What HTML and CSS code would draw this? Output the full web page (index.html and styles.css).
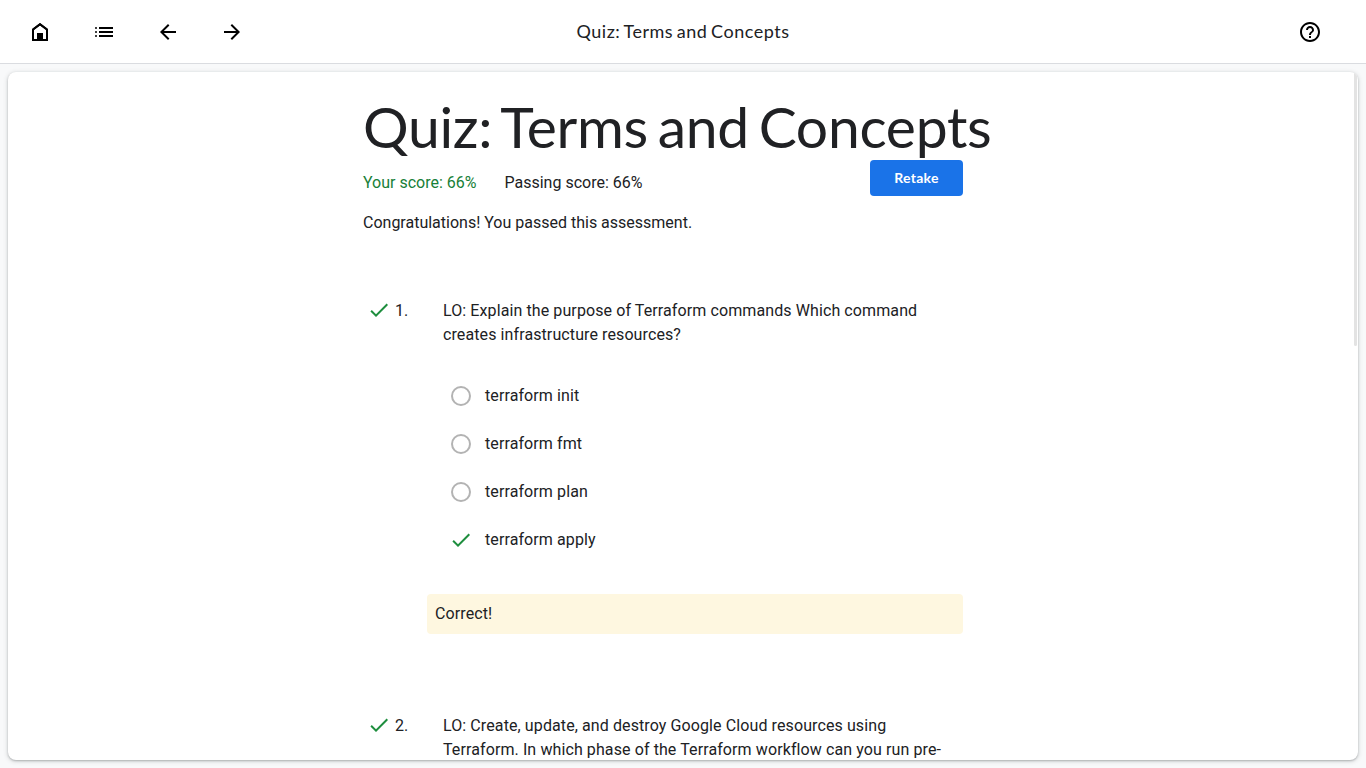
FILE: index.html
```html
<!DOCTYPE html>
<html lang="en">
<head>
<meta charset="utf-8">
<title>Quiz: Terms and Concepts</title>
<link rel="stylesheet" href="styles.css">
</head>
<body>
<header class="topbar">
  <nav class="nav">
    <a class="icon-link"><svg class="icon" viewBox="0 0 24 24"><path fill-rule="evenodd" d="M12 3 20 9v12H4V9zM6 10v9h3v-6h6v6h3v-9l-6-4.5z"/><path d="M9 13h6v7H9z"/><path d="M5 9.5 12 4.2l7 5.3" fill="none" stroke="#000" stroke-width="1.8"/></svg></a>
    <a class="icon-link"><svg class="icon" viewBox="0 0 24 24"><path d="M3 7h2v2H3zM3 11h2v2H3zM3 15h2v2H3z" opacity=".75"/><path d="M7 7h14v2H7zM7 11h14v2H7zM7 15h14v2H7z"/></svg></a>
    <a class="icon-link"><svg class="icon" viewBox="0 0 24 24"><path d="M20 11H7.83l5.59-5.59L12 4l-8 8 8 8 1.41-1.41L7.83 13H20z"/></svg></a>
    <a class="icon-link"><svg class="icon" viewBox="0 0 24 24"><path d="m12 4-1.41 1.41L16.17 11H4v2h12.17l-5.58 5.59L12 20l8-8z"/></svg></a>
  </nav>
  <div class="topbar-title">Quiz: Terms and Concepts</div>
  <div class="help"><svg class="icon" viewBox="0 0 24 24"><path d="M11 18h2v-2h-2zm1-16C6.48 2 2 6.48 2 12s4.48 10 10 10 10-4.48 10-10S17.52 2 12 2m0 18c-4.41 0-8-3.59-8-8s3.59-8 8-8 8 3.59 8 8-3.59 8-8 8m0-14c-2.21 0-4 1.79-4 4h2c0-1.1.9-2 2-2s2 .9 2 2c0 2-3 1.75-3 5h2c0-2.25 3-2.5 3-5 0-2.21-1.79-4-4-4"/></svg></div>
</header>
<main class="card">
  <div class="scroll-thumb"></div>
  <div class="content">
    <h1 class="title">Quiz: Terms and Concepts</h1>
    <div class="scores">
      <span class="score passed">Your score: 66%</span>
      <span class="score">Passing score: 66%</span>
      <button class="retake">Retake</button>
    </div>
    <p class="message">Congratulations! You passed this assessment.</p>
    <section class="question">
      <div class="marker"><svg class="icon check" viewBox="0 0 24 24"><path d="M9 16.17 4.83 12l-1.42 1.41L9 19 21 7l-1.41-1.41z"/></svg><span>1.</span></div>
      <div class="prompt">LO: Explain the purpose of Terraform commands Which command<br>creates infrastructure resources?</div>
    </section>
    <ul class="options">
      <li class="option"><span class="radio"></span>terraform init</li>
      <li class="option"><span class="radio"></span>terraform fmt</li>
      <li class="option"><span class="radio"></span>terraform plan</li>
      <li class="option"><svg class="icon check" viewBox="0 0 24 24"><path d="M9 16.17 4.83 12l-1.42 1.41L9 19 21 7l-1.41-1.41z"/></svg>terraform apply</li>
    </ul>
    <div class="feedback">Correct!</div>
    <section class="question">
      <div class="marker"><svg class="icon check" viewBox="0 0 24 24"><path d="M9 16.17 4.83 12l-1.42 1.41L9 19 21 7l-1.41-1.41z"/></svg><span>2.</span></div>
      <div class="prompt">LO: Create, update, and destroy Google Cloud resources using<br>Terraform. In which phase of the Terraform workflow can you run pre-</div>
    </section>
  </div>
</main>
</body>
</html>
```
FILE: styles.css
```css
* { box-sizing: border-box; }
body {
  margin: 0;
  height: 768px;
  overflow: hidden;
  background: #f8f9fa;
  color: #202124;
  font: 16px/24px Roboto, sans-serif;
}
.topbar {
  height: 64px;
  display: grid;
  grid-template-columns: 1fr auto 1fr;
  align-items: center;
  padding: 0 28px;
  background: #fff;
  border-bottom: 1px solid #dadce0;
}
.nav { display: flex; gap: 40px; padding-top: 1px; }
.icon-link { display: flex; }
.icon { display: block; flex: none; width: 24px; height: 24px; fill: #000; }
.topbar-title {
  font: 18px/24px Lato, sans-serif;
  letter-spacing: .52px;
  word-spacing: -1.5px;
  padding-bottom: 2px;
}
.help { justify-self: end; padding-top: 1px; margin-right: 16px; }
.card {
  position: relative;
  height: 688px;
  margin: 8px 8px 0;
  overflow: hidden;
  background: #fff;
  border-radius: 8px;
  box-shadow: 0 1px 2px rgba(60, 64, 67, .3), 0 1px 4px 1px rgba(60, 64, 67, .15);
}
.scroll-thumb {
  position: absolute;
  top: 0;
  right: 1px;
  width: 3px;
  height: 274px;
  border-radius: 0 0 2px 2px;
  background: #e3e3e3;
}
.content { width: 600px; margin-left: 355px; padding-top: 22px; }
.title {
  margin: 0 0 2px;
  font: 400 57px/64px Lato, sans-serif;
  letter-spacing: -.28px;
  word-spacing: -4.6px;
  white-space: nowrap;
}
.scores { display: flex; height: 36px; }
.score { margin-right: 28px; padding-top: 11px; }
.passed { color: #188038; }
.retake {
  width: 93px;
  height: 36px;
  margin-left: auto;
  padding: 0;
  border: 0;
  border-radius: 4px;
  background: #1a73e8;
  color: #fff;
  font: 700 14px/36px Lato, sans-serif;
  letter-spacing: .25px;
}
.message { margin: 15px 0 64px; }
.question { display: flex; white-space: nowrap; }
.prompt, .option, .feedback { letter-spacing: .1px; }
.marker { display: flex; width: 80px; padding-left: 4px; gap: 4px; }
.marker .check { margin-top: -1px; }
.options { list-style: none; margin: 25px 0 30px; padding: 0 0 0 86px; }
.option { display: flex; align-items: center; gap: 12px; height: 48px; }
.radio { width: 20px; height: 20px; margin: 0 2px; border: 2px solid #b3b3b3; border-radius: 50%; }
.feedback {
  height: 40px;
  margin: 0 0 80px 64px;
  padding: 8px;
  border-radius: 4px;
  background: #fef7e0;
}
.check { fill: #1e8e3e; }
```
